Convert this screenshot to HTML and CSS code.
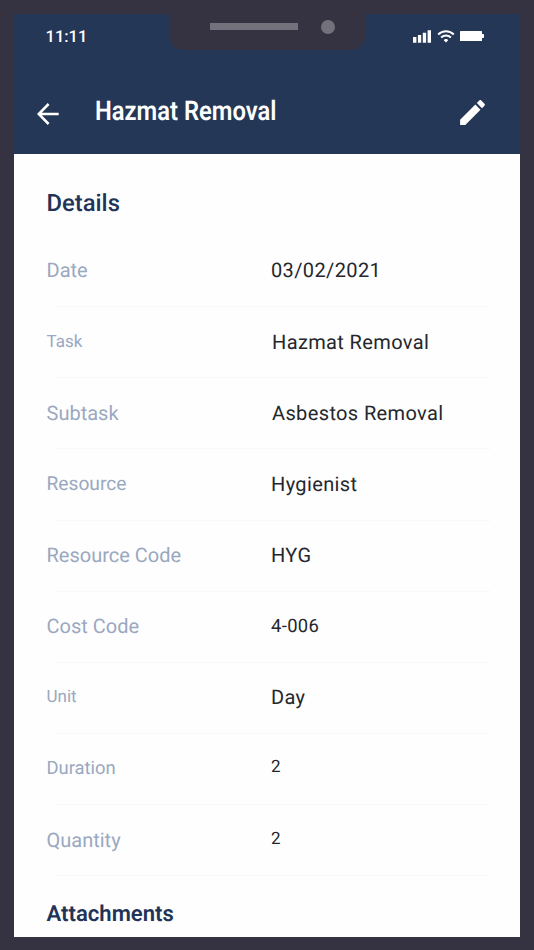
FILE: index.html
```html
<!DOCTYPE html>
<html lang="en">
<head>
<meta charset="utf-8">
<title>Hazmat Removal</title>
<link rel="stylesheet" href="styles.css">
</head>
<body>
<div class="phone">
  <div class="notch"><span class="speaker"></span><span class="camera"></span></div>
  <header class="header">
    <div class="status">
      <span class="time">11:11</span>
      <div class="indicators">
        <svg class="signal" width="18" height="13" viewBox="0 0 18 13" fill="#fff"><path d="M0 7h3.4v5.7H0zM4.9 5h3.3v7.7H4.9zM9.8 2.7h3.3v10H9.8zM14.6.2H18v12.5h-3.4z"/></svg>
        <svg class="wifi" width="18" height="13" viewBox="0 0 18 13" fill="none" stroke="#fff" stroke-width="2"><path d="M1.2 4.5C5.5.1 12.500.1 16.800 4.500M4.100 7.500c2.800-2.600 7-2.600 9.800 0"/><path d="M9 8.900c-1.200 0-2 .6-2.200 1.400L9 12.600l2.200-2.300C11 9.500 10.200 8.900 9 8.900z" fill="#fff" stroke="none"/></svg>
        <svg class="battery" width="24" height="10" viewBox="0 0 24 10" fill="#fff"><rect width="22" height="10" rx=".6"/><path d="M22 3h1.200q.8 0 .8.800v2.400q0 .8-.8.8H22z"/></svg>
      </div>
    </div>
    <div class="bar">
      <svg class="back" width="22" height="22" viewBox="0 0 22 22" fill="none" stroke="#fff" stroke-width="2.500"><path d="M11.600 1 1.700 11l9.900 10M1.700 11H21.700"/></svg>
      <h1 class="title">Hazmat Removal</h1>
      <svg class="edit" width="33" height="33" viewBox="0 0 24 24" fill="#fff"><path d="M3 17.250V21h3.750L17.810 9.940l-3.750-3.750L3 17.250zM20.710 7.040c.39-.39.39-1.020 0-1.410l-2.340-2.340c-.39-.39-1.020-.39-1.410 0l-1.830 1.830 3.750 3.750 1.830-1.830z"/></svg>
    </div>
  </header>
  <main class="content">
    <h2 class="heading">Details</h2>
    <dl class="list">
      <div class="row"><dt>Date</dt><dd>03/02/2021</dd></div>
      <div class="row"><dt class="small">Task</dt><dd class="inset">Hazmat Removal</dd></div>
      <div class="row"><dt>Subtask</dt><dd class="inset">Asbestos Removal</dd></div>
      <div class="row"><dt class="large">Resource</dt><dd>Hygienist</dd></div>
      <div class="row"><dt>Resource Code</dt><dd>HYG</dd></div>
      <div class="row"><dt>Cost Code</dt><dd class="medium">4-006</dd></div>
      <div class="row"><dt class="small">Unit</dt><dd>Day</dd></div>
      <div class="row"><dt class="medium">Duration</dt><dd class="tiny">2</dd></div>
      <div class="row"><dt>Quantity</dt><dd class="tiny">2</dd></div>
    </dl>
    <h2 class="heading attachments">Attachments</h2>
  </main>
</div>
</body>
</html>
```

FILE: styles.css
```css
* { box-sizing: border-box; }

body {
  margin: 0;
  background: #353342;
  font-family: Roboto, "Liberation Sans", sans-serif;
  text-rendering: geometricPrecision;
}

.phone {
  position: relative;
  display: flex;
  flex-direction: column;
  height: 950px;
  padding: 13.5px 14px 13px 13.5px;
}

.notch {
  position: absolute;
  top: 0;
  left: 169px;
  display: flex;
  align-items: center;
  justify-content: space-between;
  width: 196px;
  height: 49.5px;
  padding: 3.5px 30.5px 0 41px;
  background: #353342;
  border-radius: 0 0 14px 14px;
}

.speaker { width: 88px; height: 6.5px; background: #73727c; }
.camera { width: 14px; height: 14px; border-radius: 50%; background: #73727c; }

.header {
  flex: none;
  height: 140px;
  background: #243757;
  color: #fff;
}

.status {
  display: flex;
  align-items: center;
  justify-content: space-between;
  height: 45px;
  padding: 0 36.5px 0 32px;
}

.time { padding-top: 3px; font-size: 16.5px; font-weight: 500; }

.indicators { display: flex; align-items: center; }
.wifi { margin-left: 6px; }
.battery { margin-left: 5px; }

.bar {
  display: flex;
  align-items: center;
  height: 76px;
  margin-top: 14px;
  padding: 4px 31.5px 0 23px;
}

.back { margin-top: 2px; }

.title {
  flex: 1;
  margin: -4px 0 0 36.5px;
  font-size: 27px;
  line-height: 32px;
  font-weight: 600;
  white-space: nowrap;
  transform: scaleX(0.88);
  transform-origin: left;
}

.edit { margin-top: -1px; }

.content {
  flex: 1;
  min-height: 0;
  overflow: hidden;
  padding: 35px 30.5px 0 33px;
  background: #fefefe;
}

.heading {
  margin: 0;
  color: #1f3458;
  font-size: 23.8px;
  line-height: 28px;
  font-weight: 500;
}

.attachments { margin-top: 23.5px; font-size: 22.1px; font-weight: 600; }

.list { margin: 19.5px 0 0; }

.row {
  display: flex;
  align-items: flex-start;
  height: 71.15px;
  padding-top: 24.4px;
  background: linear-gradient(#f8f8f9, #f8f8f9) 8px 100% / 100% 1px no-repeat;
  font-size: 20px;
  line-height: 1;
}

dt { width: 224.5px; color: #9aa8c0; }
dd { margin: 0; color: #24272c; letter-spacing: 0.37px; }
.inset { margin-left: 1px; }
.small { padding-top: 2px; font-size: 17px; }
.tiny { padding-top: 1px; font-size: 17px; }
.medium { padding-top: 1.5px; font-size: 18.4px; }
.large { padding-top: 0.5px; font-size: 19.2px; }
```
